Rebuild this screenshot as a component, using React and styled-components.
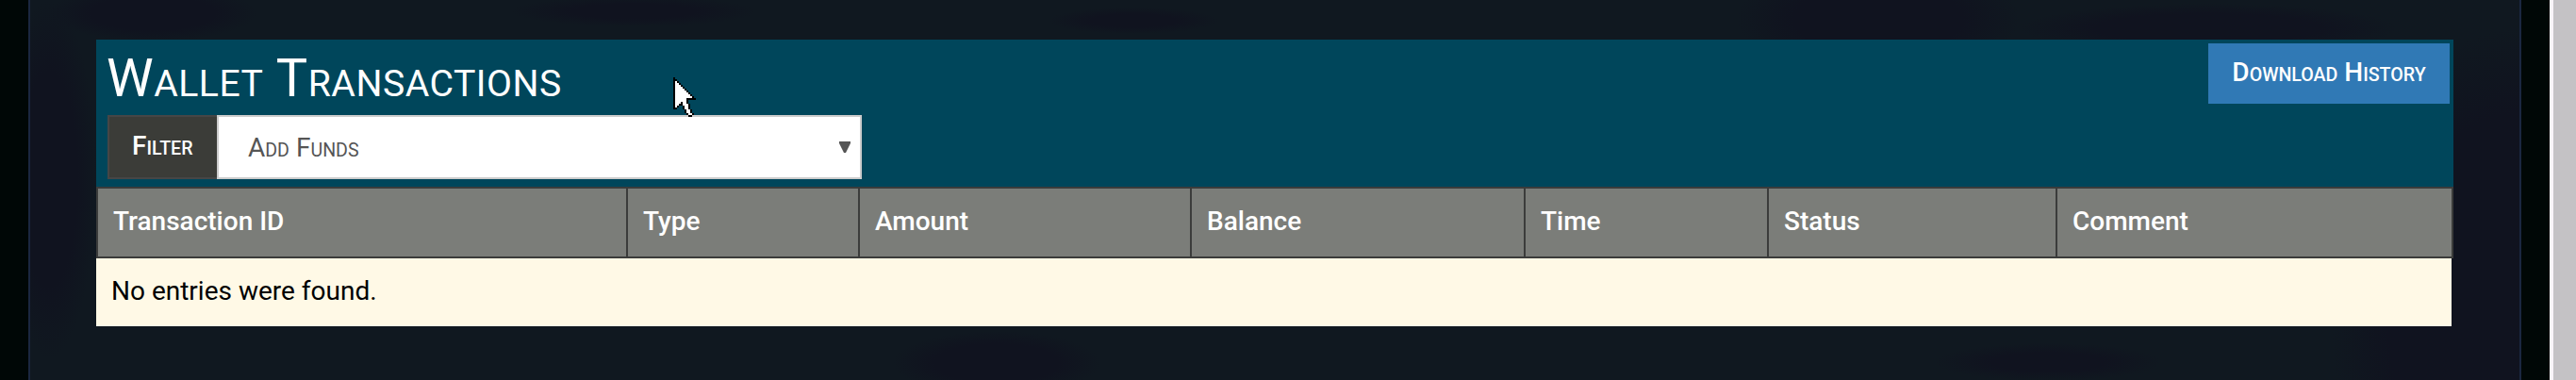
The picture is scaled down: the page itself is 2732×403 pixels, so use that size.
import React from "react";
import styled, { createGlobalStyle } from "styled-components";

const columns = [
  { label: "Transaction ID", width: 562 },
  { label: "Type", width: 246 },
  { label: "Amount", width: 352 },
  { label: "Balance", width: 354 },
  { label: "Time", width: 258 },
  { label: "Status", width: 306 },
  { label: "Comment", width: 420 }
];

// one string per pixel row, X = outline, . = fill
const pointerRows = [
  "X",
  "XX",
  "X.X",
  "X..X",
  "X...X",
  "X....X",
  "X.....X",
  "X......X",
  "X.......X",
  "X........X",
  "X.........X",
  "X......XXXXX",
  "X......X",
  "X...X..X",
  "X..XX...X",
  "X.X  X..X",
  "XX   X..X",
  "      X..X",
  "      X..X",
  "       X..X",
  "        XX"
];

const Pointer = () => (
  <PointerSvg viewBox="0 0 12 21" width="24" height="42" shapeRendering="crispEdges">
    {pointerRows.map((row, y) => row.split("").map((cell, x) => (
      cell === " " || <rect key={`${x}-${y}`} x={x} y={y} width="1" height="1" fill={cell === "X" ? "#000" : "#fff"} />
    )))}
  </PointerSvg>
);

const SmallCaps = ({ children }) => children.split(" ").map((word, i) => (
  <React.Fragment key={word}>
    {i > 0 ? " " : null}{word[0]}<Small>{word.slice(1)}</Small>
  </React.Fragment>
));

const App = () => (
  <Page>
    <GlobalStyle />
    <Content>
      <Wallet>
        <Heading>
          <div>
            <Title><SmallCaps>Wallet Transactions</SmallCaps></Title>
            <FilterGroup>
              <FilterLabel htmlFor="filter"><SmallCaps>Filter</SmallCaps></FilterLabel>
              <Select id="filter">
                <span><SmallCaps>Add Funds</SmallCaps></span>
                <Caret viewBox="0 0 12 12" width="12" height="12">
                  <path d="M0 0H12V2L7 12H5L0 2Z" />
                </Caret>
              </Select>
            </FilterGroup>
          </div>
          <Download><SmallCaps>Download History</SmallCaps></Download>
        </Heading>
        <HeaderRow>
          {columns.map(({ label, width }) => <HeaderCell key={label} $width={width}>{label}</HeaderCell>)}
        </HeaderRow>
        <EmptyRow>No entries were found.</EmptyRow>
        <Pointer />
      </Wallet>
    </Content>
    <Scrollbar />
  </Page>
);

const GlobalStyle = createGlobalStyle`
  * {
    box-sizing: border-box;
  }
  body {
    background: #000706;
    font-family: Roboto, sans-serif;
    font-size: 28px;
    margin: 0;
    overflow: hidden;
  }
`;
const Page = styled.div`
  display: flex;
  height: 403px;
  justify-content: space-between;
  padding-left: 30px;
  width: 2732px;
`;
// faint darker patches over the panel colour
const Content = styled.main`
  background:
    radial-gradient(ellipse 110px 30px at 130px 14px, #10131f 60%, transparent 100%),
    radial-gradient(ellipse 50px 190px at 20px 190px, #10131f 60%, transparent 100%),
    radial-gradient(ellipse 130px 16px at 640px 12px, #10131f 50%, transparent 100%),
    radial-gradient(ellipse 90px 14px at 1170px 22px, #10131f 50%, transparent 100%),
    radial-gradient(ellipse 150px 60px at 1960px 20px, #10131f 60%, transparent 100%),
    radial-gradient(ellipse 200px 26px at 2310px 30px, #10131f 60%, transparent 100%),
    radial-gradient(ellipse 110px 34px at 1025px 385px, #10131f 60%, transparent 100%),
    radial-gradient(ellipse 120px 20px at 2140px 384px, #10131f 50%, transparent 100%),
    radial-gradient(ellipse 200px 300px at 100% 330px, #10131f 70%, transparent 100%),
    #101820;
  border: solid #1b2740;
  border-width: 0 2px;
  padding: 42px 70px 0;
  width: 2644px;
`;
const Wallet = styled.section`
  position: relative;
  width: 2500px;
`;
const Small = styled.span`
  font-size: 0.7em;
  line-height: 1;
  text-transform: uppercase;
`;
const Heading = styled.header`
  align-items: flex-start;
  background: #00465b;
  display: flex;
  height: 156px;
  justify-content: space-between;
  padding: 4px 4px 0 12px;
`;
const Title = styled.h1`
  color: #fff;
  font-size: 56px;
  font-weight: 400;
  letter-spacing: 0.5px;
  line-height: 62px;
  margin: 6px 0 8px -1px;
  white-space: nowrap;
`;
const FilterGroup = styled.div`
  display: flex;
  height: 68px;
  width: 800px;
`;
const FilterLabel = styled.label`
  background: #3b3c38;
  border: 2px solid #464646;
  border-right: none;
  color: #fff;
  font-weight: 500;
  line-height: 62px;
  padding-left: 24px;
  width: 116px;
`;
const Select = styled.button`
  align-items: center;
  background: #fff;
  border: 2px solid #ccc;
  color: #555;
  display: flex;
  flex: 1;
  font: inherit;
  justify-content: space-between;
  padding: 0 10px 0 31px;
  text-align: left;

  & > span {
    padding-top: 1px;
  }
`;
const Caret = styled.svg`
  fill: #555;
`;
const Download = styled.button`
  background: #3079b5;
  border: none;
  color: #fff;
  font: inherit;
  font-weight: 500;
  height: 64px;
  line-height: 62px;
  padding: 0 0 2px;
  white-space: nowrap;
  width: 256px;
`;
const HeaderRow = styled.div`
  background: #7b7d79;
  border: solid #3b3c3b;
  border-width: 2px 0 2px 2px;
  display: flex;
  height: 76px;
`;
const HeaderCell = styled.div`
  border-right: 2px solid #3b3c3b;
  color: #fff;
  flex: 0 0 ${props => props.$width}px;
  font-weight: 500;
  line-height: 70px;
  padding-left: 16px;
`;
const EmptyRow = styled.div`
  background: #fff9e6;
  color: #000;
  height: 72px;
  line-height: 70px;
  margin-right: 2px;
  padding-left: 16px;
`;
const PointerSvg = styled.svg`
  left: 612px;
  position: absolute;
  top: 40px;
`;
const Scrollbar = styled.div`
  background: #c4c2c5;
  border-left: 4px solid #f8f4f8;
  width: 28px;
`;

export default App;
